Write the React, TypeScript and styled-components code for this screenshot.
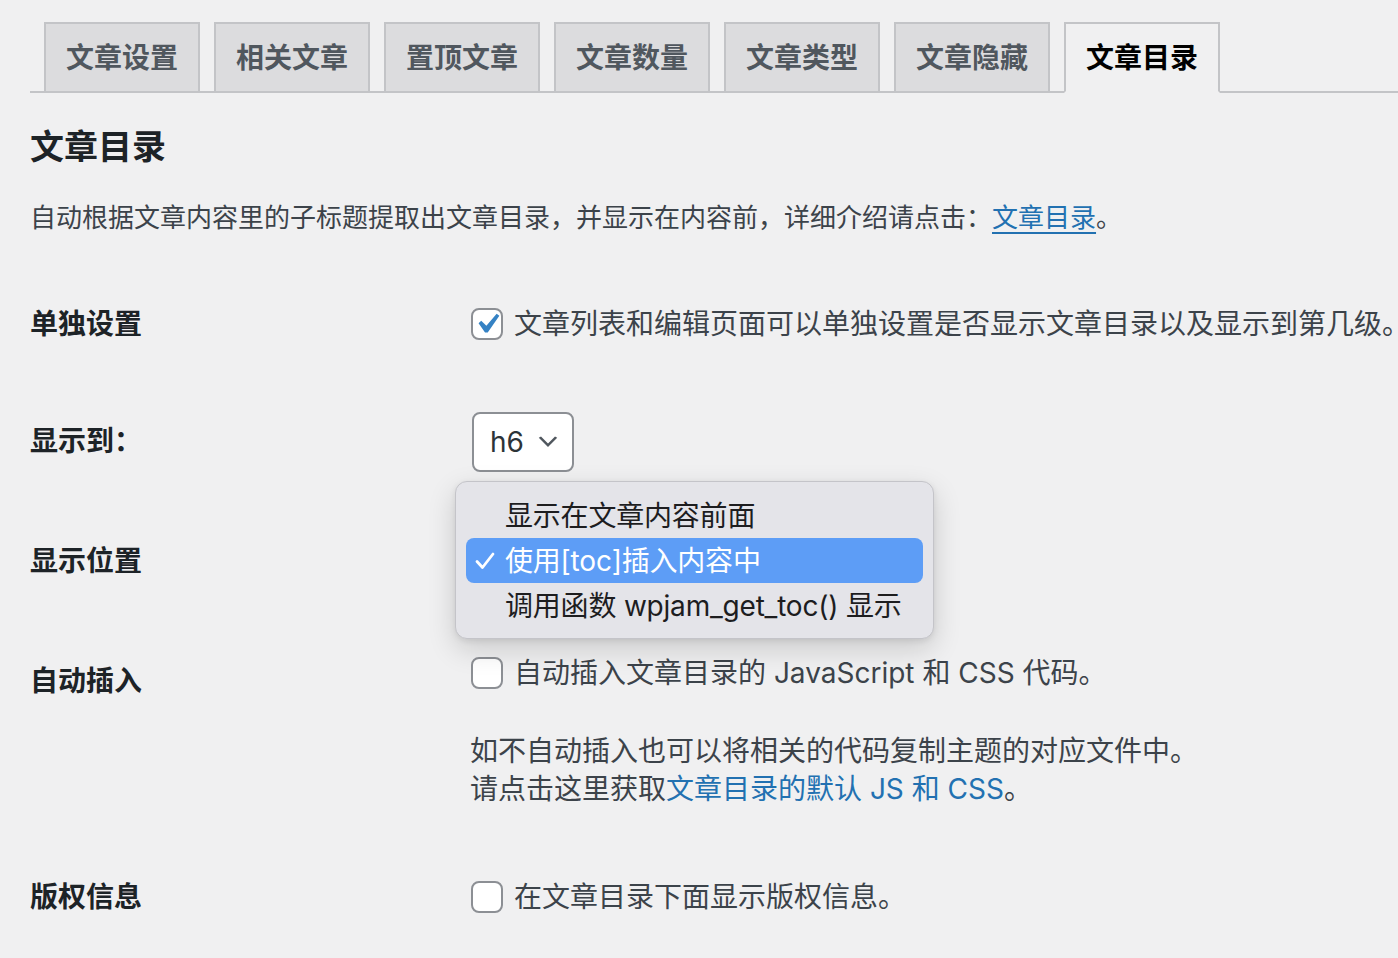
import React from 'react';
import styled, { createGlobalStyle } from 'styled-components';

const GlobalStyle = createGlobalStyle`
  html, body {
    margin: 0;
    padding: 0;
    background: #f0f0f1;
    overflow: hidden;
  }
  body {
    font-family: Inter, "Noto Sans CJK SC", "Noto Sans", sans-serif;
    color: #3c434a;
  }
`;

const tabs = ['文章设置', '相关文章', '置顶文章', '文章数量', '文章类型', '文章隐藏', '文章目录'];
const ACTIVE_TAB = '文章目录';

const positions = ['显示在文章内容前面', '使用[toc]插入内容中', '调用函数 wpjam_get_toc() 显示'];
const SELECTED_POSITION = 1;

const Page = styled.div`
  width: 1398px;
  padding-left: 30px;
  box-sizing: border-box;
`;

const TabBar = styled.nav`
  display: flex;
  gap: 14px;
  padding: 22px 0 0 14px;
  border-bottom: 2px solid #c3c4c7;
`;

const Tab = styled.a<{ $active?: boolean }>`
  display: flex;
  align-items: center;
  justify-content: center;
  width: 156px;
  height: 71px;
  margin-bottom: -2px;
  padding-bottom: 3px;
  box-sizing: border-box;
  border: 2px solid #c3c4c7;
  border-bottom-color: ${(p) => (p.$active ? '#f0f0f1' : '#c3c4c7')};
  background: ${(p) => (p.$active ? '#f0f0f1' : '#dcdcde')};
  color: ${(p) => (p.$active ? '#000' : '#50575e')};
  font-size: 28px;
  font-weight: 700;
  cursor: pointer;
`;

const Title = styled.h2`
  margin: 32px 0 0;
  font-size: 34px;
  line-height: 44px;
  font-weight: 700;
  color: #1d2327;
`;

const Description = styled.p`
  margin: 29px 0 0;
  font-size: 26px;
  line-height: 39px;
  color: #3c434a;
  white-space: nowrap;

  a {
    color: #2271b1;
    text-decoration: underline;
    text-underline-offset: 5px;
  }
`;

const FormTable = styled.div`
  margin-top: 28px;
`;

const FormRow = styled.div`
  display: grid;
  grid-template-columns: 420px 1fr;
`;

const Label = styled.div`
  align-self: start;
  padding: 41px 20px 40px 0;
  font-size: 28px;
  line-height: 36px;
  font-weight: 700;
  color: #1d2327;
`;

const Field = styled.div`
  align-self: center;
  padding: 30px 20px;
  font-size: 28px;
  line-height: 42px;
  color: #3c434a;
  white-space: nowrap;
`;

const CheckLabel = styled.label`
  display: flex;
  align-items: center;
  gap: 11px;
`;

const Box = styled.span`
  position: relative;
  flex: none;
  width: 32px;
  height: 32px;
  margin-left: 1px;
  box-sizing: border-box;
  border: 2px solid #8c8f94;
  border-radius: 8px;
  background: #fff;

  svg {
    position: absolute;
    left: -6px;
    top: -6px;
  }
`;

const Checkbox = ({ checked }: { checked?: boolean }) => (
  <Box>
    {checked && (
      <svg width="40" height="40" viewBox="0 0 20 20">
        <path d="M14.83 4.89l1.34.94-5.81 8.38H9.02L5.78 9.67l1.34-1.25 2.57 2.4z" fill="#3582c4" />
      </svg>
    )}
  </Box>
);

const SelectWrap = styled.div`
  position: relative;
  display: inline-block;
`;

const Select = styled.div`
  display: inline-flex;
  align-items: center;
  gap: 10px;
  height: 60px;
  margin-left: 2px;
  padding: 0 10px 0 16px;
  box-sizing: border-box;
  border: 2px solid #8c8f94;
  border-radius: 8px;
  background: #fff;
  font-size: 28px;
  color: #2c3338;
`;

const Chevron = () => (
  <svg width="28" height="28" viewBox="0 0 20 20">
    <path d="M5 6l5 5 5-5 1.6.9-6.6 6.6-6.6-6.6z" fill="#50575e" />
  </svg>
);

const Menu = styled.div`
  position: absolute;
  top: -51px;
  left: -15px;
  z-index: 10;
  width: 479px;
  box-sizing: border-box;
  padding: 11px 10px 10px;
  background: #e4e4e9;
  border: 1px solid #c4c4c9;
  border-radius: 12px;
  box-shadow: 0 10px 28px rgba(0, 0, 0, 0.16), 0 2px 6px rgba(0, 0, 0, 0.08);
`;

const MenuItem = styled.div<{ $selected?: boolean }>`
  position: relative;
  display: flex;
  align-items: center;
  height: 45px;
  padding-left: 39px;
  border-radius: 8px;
  background: ${(p) => (p.$selected ? '#5d9df6' : 'transparent')};
  color: ${(p) => (p.$selected ? '#fff' : '#1d1d1f')};
  font-size: 28px;
  letter-spacing: -0.2px;

  svg {
    position: absolute;
    left: 9px;
    top: 14px;
  }
`;

const Help = styled.p`
  margin: 38px 0 0;
  font-size: 28px;
  line-height: 38px;
  color: #3c434a;

  a {
    color: #2271b1;
    text-decoration: none;
  }
`;

const App = () => (
  <Page>
    <GlobalStyle />
    <TabBar>
      {tabs.map((t) => (
        <Tab key={t} $active={t === ACTIVE_TAB}>
          {t}
        </Tab>
      ))}
    </TabBar>

    <Title>文章目录</Title>
    <Description>
      自动根据文章内容里的子标题提取出文章目录，并显示在内容前，详细介绍请点击：<a>文章目录</a>。
    </Description>

    <FormTable>
      <FormRow>
        <Label>单独设置</Label>
        <Field>
          <CheckLabel>
            <Checkbox checked />
            文章列表和编辑页面可以单独设置是否显示文章目录以及显示到第几级。
          </CheckLabel>
        </Field>
      </FormRow>

      <FormRow>
        <Label>显示到：</Label>
        <Field>
          <Select>
            h6
            <Chevron />
          </Select>
        </Field>
      </FormRow>

      <FormRow>
        <Label>显示位置</Label>
        <Field>
          <SelectWrap>
            <Select>
              {positions[SELECTED_POSITION]}
              <Chevron />
            </Select>
            <Menu>
              {positions.map((item, i) => (
                <MenuItem key={item} $selected={i === SELECTED_POSITION}>
                  {i === SELECTED_POSITION && (
                    <svg width="20" height="18" viewBox="0 0 20 18">
                      <polyline
                        points="2,9.5 7.5,15.5 18,2"
                        fill="none"
                        stroke="#fff"
                        strokeWidth="2.8"
                        strokeLinecap="round"
                        strokeLinejoin="round"
                      />
                    </svg>
                  )}
                  {item}
                </MenuItem>
              ))}
            </Menu>
          </SelectWrap>
        </Field>
      </FormRow>

      <FormRow>
        <Label>自动插入</Label>
        <Field>
          <CheckLabel>
            <Checkbox />
            自动插入文章目录的 JavaScript 和 CSS 代码。
          </CheckLabel>
          <Help>
            如不自动插入也可以将相关的代码复制主题的对应文件中。
            <br />
            请点击这里获取<a>文章目录的默认 JS 和 CSS</a>。
          </Help>
        </Field>
      </FormRow>

      <FormRow>
        <Label>版权信息</Label>
        <Field>
          <CheckLabel>
            <Checkbox />
            在文章目录下面显示版权信息。
          </CheckLabel>
        </Field>
      </FormRow>
    </FormTable>
  </Page>
);

export default App;
